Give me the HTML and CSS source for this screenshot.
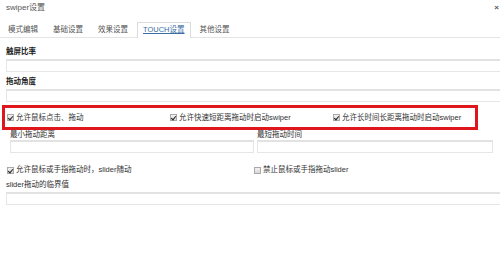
FILE: index.html
```html
<!DOCTYPE html>
<html lang="zh-CN">
<head>
  <meta charset="UTF-8" />
  <title>swiper设置</title>
  <link rel="stylesheet" href="styles.css">
</head>
<body>
  <div class="dialog">
    <div class="dialog-head">
      <span class="title">swiper设置</span>
      <span class="close">×</span>
    </div>

    <ul class="tabs">
      <li class="tab">模式编辑</li>
      <li class="tab">基础设置</li>
      <li class="tab">效果设置</li>
      <li class="tab active">TOUCH设置</li>
      <li class="tab">其他设置</li>
    </ul>

    <div class="panel">
      <div class="field first">
        <label class="strong">触屏比率</label>
        <input type="text" class="wide">
      </div>
      <div class="field">
        <label class="strong">拖动角度</label>
        <input type="text" class="wide">
      </div>

      <div class="check-row highlight">
        <label class="check"><span class="box checked"></span>允许鼠标点击、拖动</label>
        <label class="check"><span class="box checked"></span>允许快速短距离拖动时启动swiper</label>
        <label class="check"><span class="box checked"></span>允许长时间长距离拖动时启动swiper</label>
      </div>

      <div class="pair">
        <div class="field">
          <label>最小拖动距离</label>
          <input type="text">
        </div>
        <div class="field">
          <label>最短拖动时间</label>
          <input type="text">
        </div>
      </div>

      <div class="check-row halves">
        <label class="check"><span class="box checked"></span>允许鼠标或手指拖动时，slider随动</label>
        <label class="check"><span class="box"></span>禁止鼠标或手指拖动slider</label>
      </div>

      <div class="field last">
        <label>slider拖动的临界值</label>
        <input type="text" class="wide">
      </div>
    </div>
  </div>
</body>
</html>
```

FILE: styles.css
```css
html, body {
  margin: 0;
  overflow: hidden;
  background: #fff;
}

body {
  font-family: "Liberation Sans", "Noto Sans CJK SC", sans-serif;
  font-size: 7.5px;
  color: #333;
}

.dialog {
  width: 500px;
}

.dialog-head {
  height: 22px;
  display: flex;
  justify-content: space-between;
  align-items: flex-start;
  padding-left: 6px;
  box-sizing: border-box;
}

.title {
  line-height: 16px;
  font-size: 8px;
  color: #555;
}

.close {
  line-height: 16px;
  font-size: 8px;
  font-weight: bold;
  color: #555;
  margin-right: 1px;
}

.tabs {
  list-style: none;
  margin: 0;
  padding: 0 0 0 2px;
  display: flex;
  gap: 3px;
  height: 15px;
  border-bottom: 1px solid #e4e4e4;
}

.tab {
  line-height: 14px;
  padding: 0 5px;
  border: 1px solid transparent;
  border-bottom: none;
  color: #555;
}

.tab.active {
  border-color: #dcdcdc;
  background: #fff;
  height: 15px;
  color: #3a6ea5;
  text-decoration: underline;
}

.panel {
  padding-left: 6px;
}

.field label {
  display: block;
  line-height: 10px;
  margin-bottom: 2px;
}

.field label.strong {
  font-weight: bold;
  color: #222;
}

.field input {
  display: block;
  box-sizing: border-box;
  width: 100%;
  height: 13px;
  margin: 0;
  padding: 0;
  border: 1px solid #e6e6e6;
  border-top: 2px solid #e2e2e2;
  background: #fff;
}

.field input.wide {
  width: 504px;
}

.field.first {
  margin-top: 9px;
}

.field + .field {
  margin-top: 5px;
}

.check-row {
  display: grid;
  align-items: center;
  line-height: 10px;
}

.highlight {
  margin: 3px 0 0 -4px;
  width: 476px;
  height: 25px;
  box-sizing: border-box;
  border: 3px solid #e0161d;
  padding-left: 2px;
  grid-template-columns: 163px 163px 163px;
}

.halves {
  margin-top: 12px;
  margin-left: 1px;
  grid-template-columns: 247px 247px;
}

.check {
  display: flex;
  align-items: center;
  white-space: nowrap;
}

.box {
  width: 7px;
  height: 7px;
  box-sizing: border-box;
  border: 1px solid #a9a9a9;
  background: linear-gradient(#f2f2f2, #d8d8d8);
  margin-right: 2px;
  position: relative;
}

.box.checked::after {
  content: "";
  position: absolute;
  left: 1px;
  top: 0;
  width: 2px;
  height: 4px;
  border: solid #222;
  border-width: 0 1.5px 1.5px 0;
  transform: rotate(40deg);
}

.pair {
  display: grid;
  grid-template-columns: 244px 236px;
  gap: 3px;
  padding-left: 4px;
}

.pair .field {
  margin-top: 0;
}

.pair .field label {
  margin-bottom: 0;
}

.field.last {
  margin-top: 5px;
}
```
